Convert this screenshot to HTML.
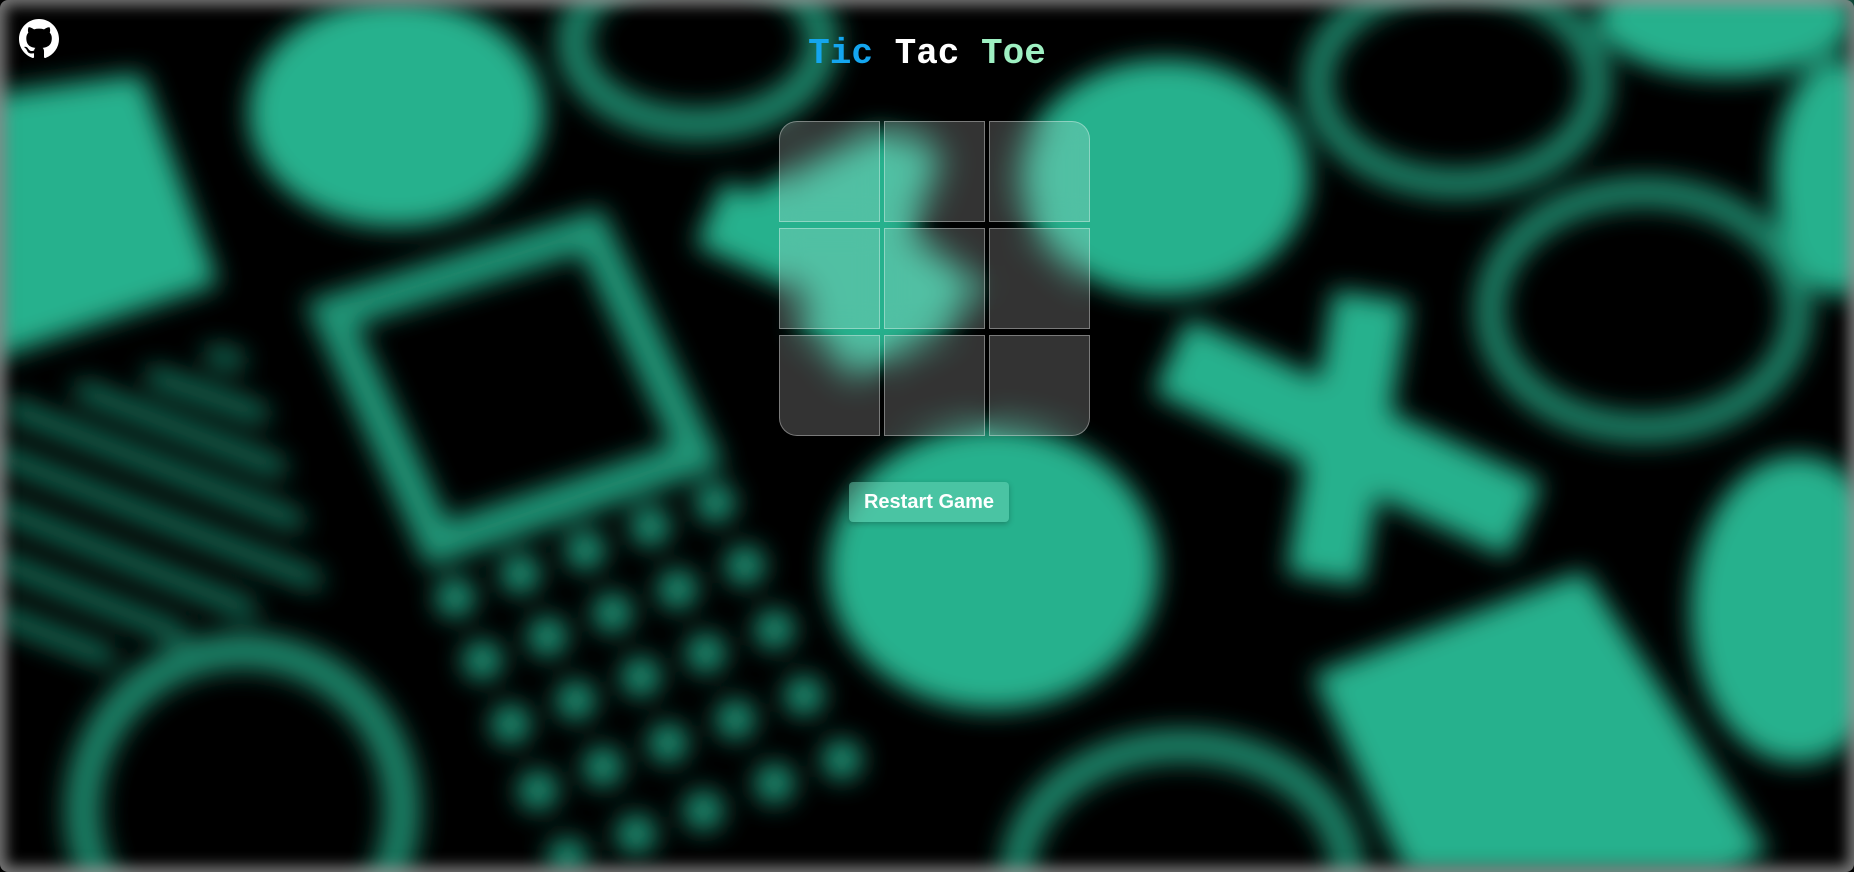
<!DOCTYPE html>
<html><head><meta charset="utf-8"><style>
html,body{margin:0;padding:0;width:1854px;height:872px;overflow:hidden;background:#000;}
#bg{position:absolute;left:0;top:0;width:1854px;height:872px;display:block;}
#vig{position:absolute;left:0;top:0;width:1854px;height:872px;box-shadow:inset 0 0 14px 6px rgba(150,150,150,.8);border-radius:8px;}
h1{position:absolute;left:0;width:1854px;top:34px;margin:0;text-align:center;font:bold 36px/40px "Liberation Mono",monospace;}
.grid{position:absolute;left:779px;top:121px;width:312px;height:316px;}
.c{position:absolute;width:101px;height:101px;box-sizing:border-box;border:1px solid rgba(255,255,255,.35);background:rgba(255,255,255,.2);backdrop-filter:blur(12px);}
.btn{position:absolute;left:849px;top:482px;width:160px;height:40px;border-radius:4px;background:rgba(120,220,190,.45);color:#fff;font:bold 20px "Liberation Sans",sans-serif;text-align:center;line-height:40px;box-shadow:0 2px 6px rgba(0,0,0,.25);}
</style></head><body>
<svg id="bg" viewBox="0 0 1568 737" preserveAspectRatio="none">
<defs><filter id="b" x="-20%" y="-20%" width="140%" height="140%"><feGaussianBlur stdDeviation="11"/></filter></defs>
<g filter="url(#b)" fill="#25b18d" stroke="#25b18d">
<ellipse cx="335" cy="95" rx="125" ry="97" stroke="none"/>
<ellipse cx="590" cy="35" rx="105" ry="70" fill="none" stroke-width="28" opacity=".75"/>
<polygon points="-10,80 120,62 185,240 -10,305" stroke="none"/>
<polygon points="280,265 500,195 590,385 370,460" fill="none" stroke-width="32" opacity=".85"/>
<g stroke-width="15" opacity=".75" stroke-linecap="round">
<line x1="180" y1="300" x2="200" y2="305"/><line x1="130" y1="318" x2="220" y2="350"/>
<line x1="70" y1="330" x2="235" y2="395"/><line x1="10" y1="345" x2="250" y2="440"/>
<line x1="0" y1="385" x2="265" y2="490"/><line x1="0" y1="430" x2="210" y2="515"/>
<line x1="0" y1="475" x2="150" y2="535"/><line x1="0" y1="520" x2="90" y2="555"/>
</g>
<g stroke="none" opacity=".85">
<circle cx="385" cy="505" r="17"/><circle cx="440" cy="485" r="17"/><circle cx="495" cy="465" r="17"/><circle cx="550" cy="445" r="17"/><circle cx="605" cy="425" r="17"/>
<circle cx="408" cy="558" r="17"/><circle cx="463" cy="538" r="17"/><circle cx="518" cy="518" r="17"/><circle cx="573" cy="498" r="17"/><circle cx="630" cy="478" r="17"/>
<circle cx="432" cy="612" r="17"/><circle cx="487" cy="592" r="17"/><circle cx="542" cy="572" r="17"/><circle cx="597" cy="552" r="17"/><circle cx="655" cy="532" r="17"/>
<circle cx="455" cy="668" r="17"/><circle cx="510" cy="648" r="17"/><circle cx="565" cy="628" r="17"/><circle cx="622" cy="608" r="17"/><circle cx="680" cy="588" r="17"/>
<circle cx="480" cy="725" r="17"/><circle cx="538" cy="705" r="17"/><circle cx="595" cy="685" r="17"/><circle cx="655" cy="662" r="17"/><circle cx="712" cy="642" r="17"/>
</g>
<circle cx="205" cy="685" r="135" fill="none" stroke-width="30" opacity=".75"/>
<path d="M600,180 L690,200 L680,270 L720,320 L800,280 L830,240 L760,190 L790,120 L740,110 Z" stroke="none"/>
<path d="M600,180 L780,260 M770,120 L700,290" stroke-width="60" fill="none"/>
<ellipse cx="840" cy="480" rx="140" ry="120" stroke="none"/>
<ellipse cx="985" cy="150" rx="122" ry="100" stroke="none"/>
<ellipse cx="1232" cy="70" rx="118" ry="85" fill="none" stroke-width="25" opacity=".75"/>
<ellipse cx="1390" cy="262" rx="130" ry="100" fill="none" stroke-width="25" opacity=".75"/>
<path d="M990,300 L1290,440" stroke-width="70" fill="none"/>
<path d="M1160,250 L1120,490" stroke-width="65" fill="none"/>
<polygon points="1110,570 1340,482 1495,720 1460,740 1190,740" stroke="none"/>
<ellipse cx="1555" cy="150" rx="55" ry="100" stroke="none"/>
<ellipse cx="1520" cy="515" rx="90" ry="130" stroke="none"/>
<ellipse cx="1460" cy="15" rx="110" ry="50" stroke="none"/>
<ellipse cx="1000" cy="740" rx="140" ry="110" fill="none" stroke-width="28" opacity=".75"/>
</g>
</svg>
<div id="vig"></div>
<svg style="position:absolute;left:19px;top:19px" width="40" height="40" viewBox="0 0 16 16"><path fill="#fff" d="M8 0C3.58 0 0 3.58 0 8c0 3.540 2.29 6.53 5.47 7.59.4.07.55-.17.55-.38 0-.19-.01-.82-.01-1.490-2.01.37-2.53-.49-2.69-.94-.09-.23-.48-.94-.82-1.13-.28-.15-.68-.52-.01-.53.63-.01 1.08.58 1.23.82.72 1.21 1.87.87 2.33.66.07-.52.28-.87.51-1.07-1.78-.2-3.64-.89-3.64-3.95 0-.87.31-1.59.82-2.15-.08-.2-.36-1.02.08-2.12 0 0 .67-.21 2.2.82.64-.18 1.32-.27 2-.27.68 0 1.36.09 2 .27 1.53-1.04 2.2-.82 2.2-.82.44 1.1.16 1.92.08 2.12.51.56.82 1.27.82 2.15 0 3.07-1.87 3.75-3.65 3.95.29.25.54.73.54 1.48 0 1.07-.01 1.93-.01 2.2 0 .21.15.46.55.38A8.013 8.013 0 0016 8c0-4.42-3.58-8-8-8z"/></svg>
<h1><span style="color:#14a6ef">Tic</span> <span style="color:#fff">Tac</span> <span style="color:#9ef0c2">Toe</span></h1>
<div class="grid">
<div class="c" style="left:0;top:0;border-top-left-radius:18px"></div>
<div class="c" style="left:105px;top:0"></div>
<div class="c" style="left:210px;top:0;border-top-right-radius:18px"></div>
<div class="c" style="left:0;top:107px"></div>
<div class="c" style="left:105px;top:107px"></div>
<div class="c" style="left:210px;top:107px"></div>
<div class="c" style="left:0;top:214px;border-bottom-left-radius:18px"></div>
<div class="c" style="left:105px;top:214px"></div>
<div class="c" style="left:210px;top:214px;border-bottom-right-radius:18px"></div>
</div>
<div class="btn">Restart Game</div>
</body></html>
